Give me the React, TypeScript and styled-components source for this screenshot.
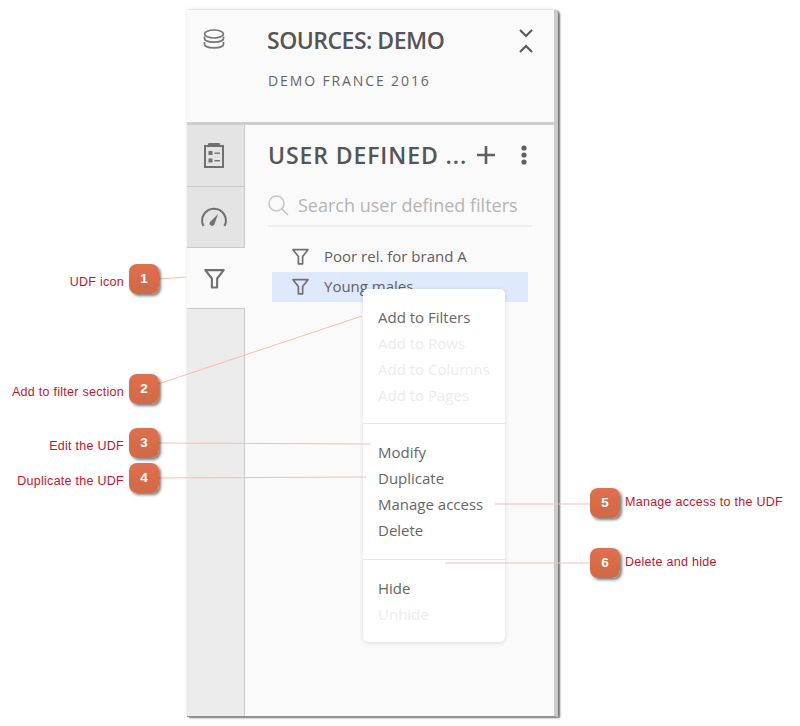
import React from "react";
import styled, { createGlobalStyle } from "styled-components";

const Global = createGlobalStyle`
  html, body { margin: 0; padding: 0; background: #fff; }
  #root { width: 800px; height: 726px; overflow: hidden; }
`;

const Page = styled.div`
  position: relative;
  width: 800px;
  height: 726px;
  padding: 10px 0 0 187px;
  box-sizing: border-box;
  background: #fff;
  font-family: "Open Sans", "Liberation Sans", sans-serif;
`;

const Panel = styled.div`
  width: 367px;
  height: 706px;
  box-sizing: content-box;
  display: flex;
  flex-direction: column;
  background: #fafafa;
  border-right: 4px solid #cbcbcb;
  border-bottom: 1px solid #8d8d8d;
  border-top-right-radius: 4px;
  box-shadow: 2px 1px 2px rgba(0, 0, 0, 0.55), 0 -1px 3px rgba(0, 0, 0, 0.12);
`;

const Header = styled.header`
  height: 112px;
  flex: none;
  display: grid;
  grid-template-columns: 80px 1fr 43px;
  border-bottom: 3px solid #cdcdcd;
  color: #505050;
`;

const HeaderIcon = styled.div`
  padding: 19px 0 0 16px;
`;

const HeaderText = styled.div`
  padding-top: 12px;
`;

const SourceTitle = styled.h1`
  margin: 0;
  font-size: 23px;
  line-height: 36px;
  font-weight: 600;
  color: #555;
  letter-spacing: -0.5px;
`;

const SourceName = styled.div`
  margin: 13px 0 0 1px;
  font-size: 14px;
  line-height: 20px;
  letter-spacing: 1.88px;
  color: #666;
`;

const Collapse = styled.div`
  padding: 18px 0 0 7px;
`;

const Body = styled.div`
  flex: 1;
  display: flex;
  min-height: 0;
`;

const Rail = styled.nav`
  width: 58px;
  flex: none;
  display: flex;
  flex-direction: column;
`;

const Tab = styled.div<{ $active?: boolean; $h: number }>`
  height: ${(p) => p.$h}px;
  box-sizing: border-box;
  display: flex;
  align-items: center;
  justify-content: center;
  padding-right: 4px;
  background: ${(p) => (p.$active ? "#fafafa" : "#e4e4e4")};
  border-right: ${(p) => (p.$active ? "0" : "1px solid #c8c8c8")};
  border-bottom: ${(p) => (p.$active ? "0" : "1px solid #c8c8c8")};
`;

const RailRest = styled.div`
  flex: 1;
  background: #ececec;
  border-right: 1px solid #c8c8c8;
  border-top: 1px solid #c8c8c8;
`;

const Content = styled.section`
  flex: 1;
  padding: 0 22px 0 23px;
  position: relative;
`;

const ContentHead = styled.div`
  height: 60px;
  display: flex;
  align-items: center;
  color: #505050;
`;

const ContentTitle = styled.h2`
  margin: 0;
  font-size: 23px;
  font-weight: 600;
  letter-spacing: 0.9px;
  white-space: nowrap;
  width: 209px;
  color: #555;
`;

const HeadIcons = styled.div`
  display: flex;
  align-items: center;
  gap: 26px;
`;

const Search = styled.div`
  height: 40px;
  display: flex;
  align-items: center;
  gap: 9px;
  border-bottom: 2px solid #eeeeee;
  margin-bottom: 15px;
`;

const SearchText = styled.span`
  font-size: 18px;
  color: #b4b4b4;
  white-space: nowrap;
`;

const List = styled.ul`
  list-style: none;
  margin: 0 0 0 4px;
  padding: 0;
  width: 256px;
`;

const Row = styled.li<{ $selected?: boolean }>`
  height: 30px;
  box-sizing: border-box;
  display: flex;
  align-items: center;
  padding: 0 0 2px 20px;
  gap: 15px;
  font-size: 15px;
  color: #5f5f5f;
  background: ${(p) => (p.$selected ? "#dfe9fc" : "transparent")};
`;

const Menu = styled.div`
  position: absolute;
  left: 118px;
  top: 164px;
  width: 142px;
  height: 353px;
  box-sizing: border-box;
  background: #fff;
  border-radius: 5px;
  box-shadow: 0 1px 4px rgba(0, 0, 0, 0.13);
  font-size: 15px;
`;

const MenuGroup = styled.div<{ $h: number; $pt: number; $line?: boolean }>`
  height: ${(p) => p.$h}px;
  box-sizing: border-box;
  padding-top: ${(p) => p.$pt}px;
  border-bottom: ${(p) => (p.$line ? "1px solid #e6e6e6" : "0")};
`;

const MenuItem = styled.div<{ $off?: boolean }>`
  height: 26px;
  line-height: 26px;
  padding-left: 15px;
  color: ${(p) => (p.$off ? "#ececec" : "#666")};
  white-space: nowrap;
`;

const Connectors = styled.svg`
  position: absolute;
  left: 0;
  top: 0;
  pointer-events: none;
`;

const Callout = styled.div<{ $x: number; $y: number }>`
  position: absolute;
  left: ${(p) => p.$x}px;
  top: ${(p) => p.$y}px;
  width: 30px;
  height: 30px;
  border-radius: 8px;
  background: linear-gradient(180deg, #e0704f 0%, #d66b47 60%, #cf6a48 100%);
  box-shadow: 2px 2px 3px rgba(0, 0, 0, 0.5);
  color: #fff;
  font: bold 13.5px/29px "Liberation Sans", sans-serif;
  text-align: center;
`;

const Label = styled.div<{ $y: number; $x?: number; $right?: number }>`
  position: absolute;
  top: ${(p) => p.$y}px;
  ${(p) => (p.$right !== undefined ? `right: ${800 - p.$right}px;` : `left: ${p.$x}px;`)}
  font: 12.5px/16px "Liberation Sans", Arial, sans-serif;
  letter-spacing: 0.27px;
  color: #c2142f;
  white-space: nowrap;
`;

const Funnel = ({ size = 20, w = 2 }: { size?: number; w?: number }) => (
  <svg width={size} height={size} viewBox="0 0 20 20">
    <path d="M1.2 2h17.6l-6.3 8v8.6h-5V10z" fill="none" stroke="#707070" strokeWidth={w} strokeLinejoin="round" />
  </svg>
);

const Db = () => (
  <svg width="22" height="21" viewBox="0 0 22 21" fill="none" stroke="#777" strokeWidth="1.7">
    <ellipse cx="11" cy="5" rx="9.5" ry="4" />
    <path d="M1.5 7.5v2c0 2.1 4.2 3.6 9.5 3.6s9.5-1.5 9.5-3.6v-2" />
    <path d="M1.5 13v2.2c0 2.1 4.2 3.6 9.5 3.6s9.5-1.5 9.5-3.6V13" />
  </svg>
);

const Chevrons = () => (
  <svg width="16" height="26" viewBox="0 0 16 26" fill="none" stroke="#5a5a5a" strokeWidth="2.2">
    <path d="M2 2l6 6 6-6" />
    <path d="M2 24l6-6 6 6" />
  </svg>
);

const Clip = () => (
  <svg width="20" height="25" viewBox="0 0 20 25">
    <rect x="1" y="3" width="18" height="21" fill="none" stroke="#707070" strokeWidth="2" />
    <rect x="4" y="0" width="12" height="4" rx="1" fill="#707070" />
    <rect x="4.5" y="8" width="4" height="4" fill="#707070" />
    <rect x="10.5" y="9.5" width="5.5" height="1.4" fill="#707070" />
    <rect x="4.5" y="15.5" width="4" height="4" fill="#707070" />
    <rect x="10.5" y="17" width="5.5" height="1.4" fill="#707070" />
  </svg>
);

const Gauge = () => (
  <svg width="26" height="20" viewBox="0 0 26 20">
    <path d="M2.6 19A11.8 11.8 0 1 1 23.4 19" fill="none" stroke="#707070" strokeWidth="2" />
    <path d="M17 7l-3.6 10.6a2.6 2.6 0 0 1-4.6-2.4z" fill="#707070" />
  </svg>
);

const Mag = () => (
  <svg width="21" height="21" viewBox="0 0 21 21" fill="none" stroke="#c4c4c4" strokeWidth="1.5">
    <circle cx="8.5" cy="8.5" r="7.5" />
    <path d="M14 14l6 6" />
  </svg>
);

const Plus = () => (
  <svg width="18" height="18" viewBox="0 0 18 18" stroke="#5f5f5f" strokeWidth="2.6">
    <path d="M9 0v18M0 9h18" />
  </svg>
);

const Dots = () => (
  <svg width="6" height="20" viewBox="0 0 6 20" fill="#5f5f5f">
    <circle cx="3" cy="3" r="2.6" />
    <circle cx="3" cy="10" r="2.6" />
    <circle cx="3" cy="17" r="2.6" />
  </svg>
);

const callouts = [
  { n: 1, x: 129, y: 264 },
  { n: 2, x: 129, y: 374 },
  { n: 3, x: 129, y: 428 },
  { n: 4, x: 129, y: 463 },
  { n: 5, x: 590, y: 488 },
  { n: 6, x: 590, y: 548 },
];

const leftLabels = [
  { t: "UDF icon", y: 274 },
  { t: "Add to filter section", y: 384 },
  { t: "Edit the UDF", y: 438 },
  { t: "Duplicate the UDF", y: 473 },
];

const rightLabels = [
  { t: "Manage access to the UDF", y: 494 },
  { t: "Delete and hide", y: 554 },
];

const lines = [
  [158, 279, 187, 277],
  [158, 384, 362, 316],
  [158, 443, 371, 444],
  [158, 478, 366, 477],
  [495, 504, 592, 504],
  [445, 563, 592, 563],
];

export default function App() {
  return (
    <Page>
      <Global />
      <Panel>
        <Header>
          <HeaderIcon>
            <Db />
          </HeaderIcon>
          <HeaderText>
            <SourceTitle>SOURCES: DEMO</SourceTitle>
            <SourceName>DEMO FRANCE 2016</SourceName>
          </HeaderText>
          <Collapse>
            <Chevrons />
          </Collapse>
        </Header>
        <Body>
          <Rail>
            <Tab $h={62}>
              <Clip />
            </Tab>
            <Tab $h={61}>
              <Gauge />
            </Tab>
            <Tab $h={60} $active>
              <Funnel size={21} />
            </Tab>
            <RailRest />
          </Rail>
          <Content>
            <ContentHead>
              <ContentTitle>USER DEFINED ...</ContentTitle>
              <HeadIcons>
                <Plus />
                <Dots />
              </HeadIcons>
            </ContentHead>
            <Search>
              <Mag />
              <SearchText>Search user defined filters</SearchText>
            </Search>
            <List>
              <Row>
                <Funnel size={17} />
                Poor rel. for brand A
              </Row>
              <Row $selected>
                <Funnel size={17} />
                Young males
              </Row>
            </List>
            <Menu>
              <MenuGroup $h={135} $pt={15} $line>
                <MenuItem>Add to Filters</MenuItem>
                <MenuItem $off>Add to Rows</MenuItem>
                <MenuItem $off>Add to Columns</MenuItem>
                <MenuItem $off>Add to Pages</MenuItem>
              </MenuGroup>
              <MenuGroup $h={136} $pt={15} $line>
                <MenuItem>Modify</MenuItem>
                <MenuItem>Duplicate</MenuItem>
                <MenuItem>Manage access</MenuItem>
                <MenuItem>Delete</MenuItem>
              </MenuGroup>
              <MenuGroup $h={82} $pt={15}>
                <MenuItem>Hide</MenuItem>
                <MenuItem $off>Unhide</MenuItem>
              </MenuGroup>
            </Menu>
          </Content>
        </Body>
      </Panel>
      <Connectors width="800" height="726" viewBox="0 0 800 726">
        {lines.map((l, i) => (
          <line key={i} x1={l[0]} y1={l[1]} x2={l[2]} y2={l[3]} stroke="#f7bfa9" strokeWidth="1" />
        ))}
      </Connectors>
      {callouts.map((c) => (
        <Callout key={c.n} $x={c.x} $y={c.y}>
          {c.n}
        </Callout>
      ))}
      {leftLabels.map((l) => (
        <Label key={l.t} $right={124} $y={l.y}>
          {l.t}
        </Label>
      ))}
      {rightLabels.map((l) => (
        <Label key={l.t} $x={625} $y={l.y}>
          {l.t}
        </Label>
      ))}
    </Page>
  );
}
